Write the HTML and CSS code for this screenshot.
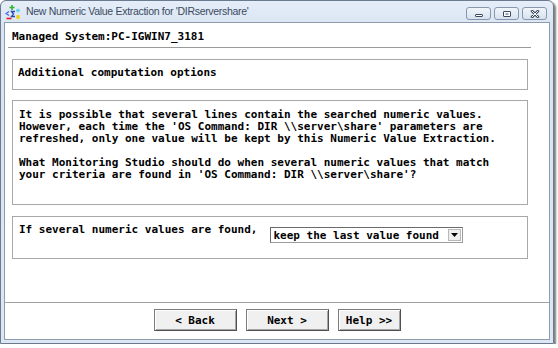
FILE: index.html
```html
<!DOCTYPE html>
<html lang="en">
<head>
  <meta charset="UTF-8">
  <title>New Numeric Value Extraction</title>
  <link rel="stylesheet" href="styles.css">
</head>
<body>
  <div class="window">
    <div class="titlebar">
      <svg class="app-icon" width="16" height="16" viewBox="0 0 16 16">
        <path d="M7 1v5M4.5 3.5h5" stroke="#2fb52f" stroke-width="1.6"/>
        <path d="M13 4.5v4M11 6.5h4M11.6 5.1l2.8 2.8M14.4 5.1l-2.8 2.8" stroke="#5ad0f0" stroke-width="1"/>
        <path d="M4 7.5l-3 2 3 2" stroke="#3b6ee0" stroke-width="1.2" fill="none"/>
        <path d="M10 7.5H6.5l2 2.5-2 2.5H10" stroke="#2848b8" stroke-width="1.3" fill="none"/>
        <path d="M1.5 14.5h5" stroke="#e02020" stroke-width="1.6"/>
        <path d="M11.5 11.5l3 3M14.5 11.5l-3 3M13 11v4M11 13h4" stroke="#f0d020" stroke-width="1.2"/>
      </svg>
      <span class="title">New Numeric Value Extraction for 'DIRservershare'</span>
      <div class="caption-buttons">
        <div class="cap-btn">
          <svg width="10" height="8" viewBox="0 0 10 8"><rect x="1.5" y="4.5" width="7" height="2" rx="0.5" fill="#fff" stroke="#3a4a60"/></svg>
        </div>
        <div class="cap-btn">
          <svg width="10" height="8" viewBox="0 0 10 8"><rect x="1.5" y="1.5" width="7" height="5" rx="0.5" fill="#fff" stroke="#3a4a60"/><rect x="3.5" y="3.5" width="3" height="1" fill="#3a4a60"/></svg>
        </div>
        <div class="cap-btn">
          <svg width="10" height="8" viewBox="0 0 10 8"><path d="M2 1l6 6M8 1L2 7" stroke="#3a4a60" stroke-width="2.6" stroke-linecap="round"/><path d="M2 1l6 6M8 1L2 7" stroke="#fff" stroke-width="1" stroke-linecap="round"/></svg>
        </div>
      </div>
    </div>

    <div class="client">
      <div class="header">Managed System:PC-IGWIN7_3181</div>

      <div class="panel panel-title">Additional computation options</div>

      <div class="panel panel-text">
        <p>It is possible that several lines contain the searched numeric values.<br>However, each time the 'OS Command: DIR \\server\share' parameters are<br>refreshed, only one value will be kept by this Numeric Value Extraction.</p>
        <p>What Monitoring Studio should do when several numeric values that match<br>your criteria are found in 'OS Command: DIR \\server\share'?</p>
      </div>

      <div class="panel panel-choice">
        <span class="choice-label">If several numeric values are found,</span>
        <div class="select">
          <span class="select-value">keep the last value found</span>
          <span class="select-arrow">
            <svg width="7" height="4" viewBox="0 0 7 4"><path d="M0 0h7L3.5 4z" fill="#000"/></svg>
          </span>
        </div>
      </div>

      <div class="footer">
        <button class="btn btn-wide">&lt; Back</button>
        <button class="btn btn-wide">Next &gt;</button>
        <button class="btn btn-help">Help &gt;&gt;</button>
      </div>
    </div>
  </div>
</body>
</html>
```

FILE: styles.css
```css
body {
  margin: 0;
  background: #ffffff;
  font-family: "DejaVu Sans Mono", "Liberation Mono", monospace;
}

.window {
  width: 554px;
  box-sizing: border-box;
  border: 1px solid #6b7a8e;
  border-radius: 6px 6px 0 0;
  background: linear-gradient(#e4edf8, #d9e4f1 30px, #dde7f3);
  padding: 0 3px 3px;
  box-shadow: 2px 2px 2px rgba(0, 0, 0, 0.5);
}

.titlebar {
  height: 21px;
  display: flex;
  align-items: flex-start;
}

.app-icon {
  margin: 3px 0 0 1px;
}

.title {
  margin: 4px 0 0 5px;
  font-family: "Liberation Sans", Arial, sans-serif;
  font-size: 10.5px;
  color: #3a4a5e;
  letter-spacing: -0.3px;
}

.caption-buttons {
  margin: 6px 3px 0 auto;
  display: flex;
  gap: 3px;
}

.cap-btn {
  width: 25px;
  height: 13px;
  box-sizing: border-box;
  border: 1px solid #8797ae;
  border-radius: 3px;
  background: linear-gradient(#f1f5fb, #d7e1ee);
  display: flex;
  justify-content: center;
  align-items: center;
}

.client {
  height: 318px;
  box-sizing: border-box;
  border: 1px solid #8e9cb1;
  background: #ffffff;
  display: flex;
  flex-direction: column;
  font-size: 11px;
  font-weight: bold;
  line-height: 12px;
  color: #000000;
}

.header {
  margin: 0 18px 0 3px;
  padding: 8px 4px 4px;
  border-bottom: 1px solid #9a9a9a;
}

.panel {
  width: 516px;
  box-sizing: border-box;
  margin: 11px 0 0 7px;
  border: 1px solid #a8a8a8;
}

.panel-title {
  padding: 7px 5px 10px;
}

.panel-text {
  margin-top: 10px;
  padding: 8px 6px 23px;
}

.panel-text p {
  margin: 0 0 12px;
}

.panel-text p:last-child {
  margin-bottom: 0;
}

.panel-choice {
  height: 43px;
  padding: 0 6px;
  display: flex;
  align-items: flex-start;
}

.choice-label {
  margin: 7px 13px 0 0;
}

.select {
  margin-top: 10px;
  width: 193px;
  height: 16px;
  box-sizing: border-box;
  border: 1px solid #9c9c9c;
  border-top-color: #6a6a6a;
  border-left-color: #6a6a6a;
  display: flex;
  align-items: center;
}

.select-value {
  flex: 1;
  padding: 1px 0 0 2px;
}

.select-arrow {
  width: 13px;
  height: 12px;
  margin-right: 1px;
  box-sizing: border-box;
  border: 1px solid #b8b8b8;
  background: #eeeeee;
  display: flex;
  justify-content: center;
  align-items: center;
}

.footer {
  margin-top: auto;
  border-top: 1px solid #a0a0a0;
  padding: 6px 0 8px;
  display: flex;
  justify-content: center;
  gap: 9px;
}

.btn {
  height: 22px;
  box-sizing: border-box;
  border: 1px solid #7c7c7c;
  border-right-color: #505050;
  border-bottom-color: #505050;
  background: #f0f0f0;
  box-shadow: inset 1px 1px #ffffff, inset -1px -1px #a6a6a6;
  font-family: "DejaVu Sans Mono", "Liberation Mono", monospace;
  font-size: 11px;
  font-weight: bold;
  color: #000000;
  padding: 0;
}

.btn-wide {
  width: 83px;
}

.btn-help {
  width: 63px;
}
```
